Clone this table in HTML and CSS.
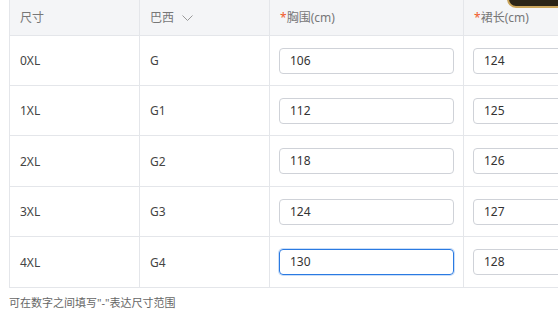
FILE: index.html
```html
<!DOCTYPE html>
<html lang="zh">
<head>
<meta charset="utf-8">
<link rel="stylesheet" href="styles.css">
</head>
<body>
<div class="wrap">
  <table class="size-table">
    <colgroup>
      <col class="c1"><col class="c2"><col class="c3"><col class="c4">
    </colgroup>
    <thead>
      <tr>
        <th>尺寸</th>
        <th><span class="sel">巴西<svg class="chev" width="11" height="6" viewBox="0 0 11 6"><path d="M0.5 0.5 L5.5 5.5 L10.5 0.5" fill="none" stroke="#999" stroke-width="1"/></svg></span></th>
        <th><span class="req">*</span>胸围(cm)</th>
        <th><span class="req">*</span>裙长(cm)</th>
      </tr>
    </thead>
    <tbody>
      <tr><td>0XL</td><td>G</td><td><div class="inp">106</div></td><td><div class="inp">124</div></td></tr>
      <tr><td>1XL</td><td>G1</td><td><div class="inp">112</div></td><td><div class="inp">125</div></td></tr>
      <tr><td>2XL</td><td>G2</td><td><div class="inp">118</div></td><td><div class="inp">126</div></td></tr>
      <tr><td>3XL</td><td>G3</td><td><div class="inp">124</div></td><td><div class="inp">127</div></td></tr>
      <tr><td>4XL</td><td>G4</td><td><div class="inp focus">130</div></td><td><div class="inp">128</div></td></tr>
    </tbody>
  </table>
  <p class="note">可在数字之间填写"-"表达尺寸范围</p>
  <div class="pop"></div>
</div>
</body>
</html>
```
FILE: styles.css
```css
html, body {
  margin: 0;
  padding: 0;
  background: #fff;
  overflow: hidden;
}
body {
  font-family: "Noto Sans", "Noto Sans CJK SC", sans-serif;
  font-size: 12px;
  color: #333;
}
.wrap {
  position: relative;
  padding-left: 9px;
  height: 310px;
  overflow: hidden;
}
.size-table {
  border-collapse: collapse;
  table-layout: fixed;
  width: 650px;
  border-left: 1px solid #e4e6ea;
}
.c1 { width: 130px; }
.c2 { width: 130px; }
.c3 { width: 194px; }
.c4 { width: 196px; }
.size-table th {
  height: 35px;
  background: #f4f5f7;
  color: #777;
  font-weight: normal;
  text-align: left;
  padding: 0 10px;
  border-right: 1px solid #e4e6ea;
  border-bottom: 1px solid #e4e6ea;
  line-height: 35px;
}
.size-table td {
  height: 49px;
  padding: 0 9px 0 10px;
  border-right: 1px solid #e4e6ea;
  border-bottom: 1px solid #e4e6ea;
  color: #444;
}
.size-table tbody tr:nth-child(3) td,
.size-table tbody tr:nth-child(5) td {
  height: 50px;
}
.size-table td .inp { margin-left: -1px; }
.sel {
  display: inline-flex;
  align-items: center;
  gap: 8px;
}
.req { color: #f05a2a; }
.inp {
  height: 24px;
  line-height: 24px;
  border: 1px solid #cfd2d8;
  border-radius: 4px;
  padding: 0 10px;
  width: 153px;
  color: #333;
}
.inp.focus {
  border-color: #2a7ae2;
  box-shadow: 0 0 0 1px rgba(42, 122, 226, 0.25);
}
.note {
  margin: 8px 0 0 0;
  font-size: 11px;
  line-height: 14px;
  color: #666;
}
.pop {
  position: absolute;
  left: 507px;
  top: -22px;
  width: 90px;
  height: 26px;
  border: 2px solid #caa55c;
  border-radius: 9px;
  background: #2b2417;
}
```
